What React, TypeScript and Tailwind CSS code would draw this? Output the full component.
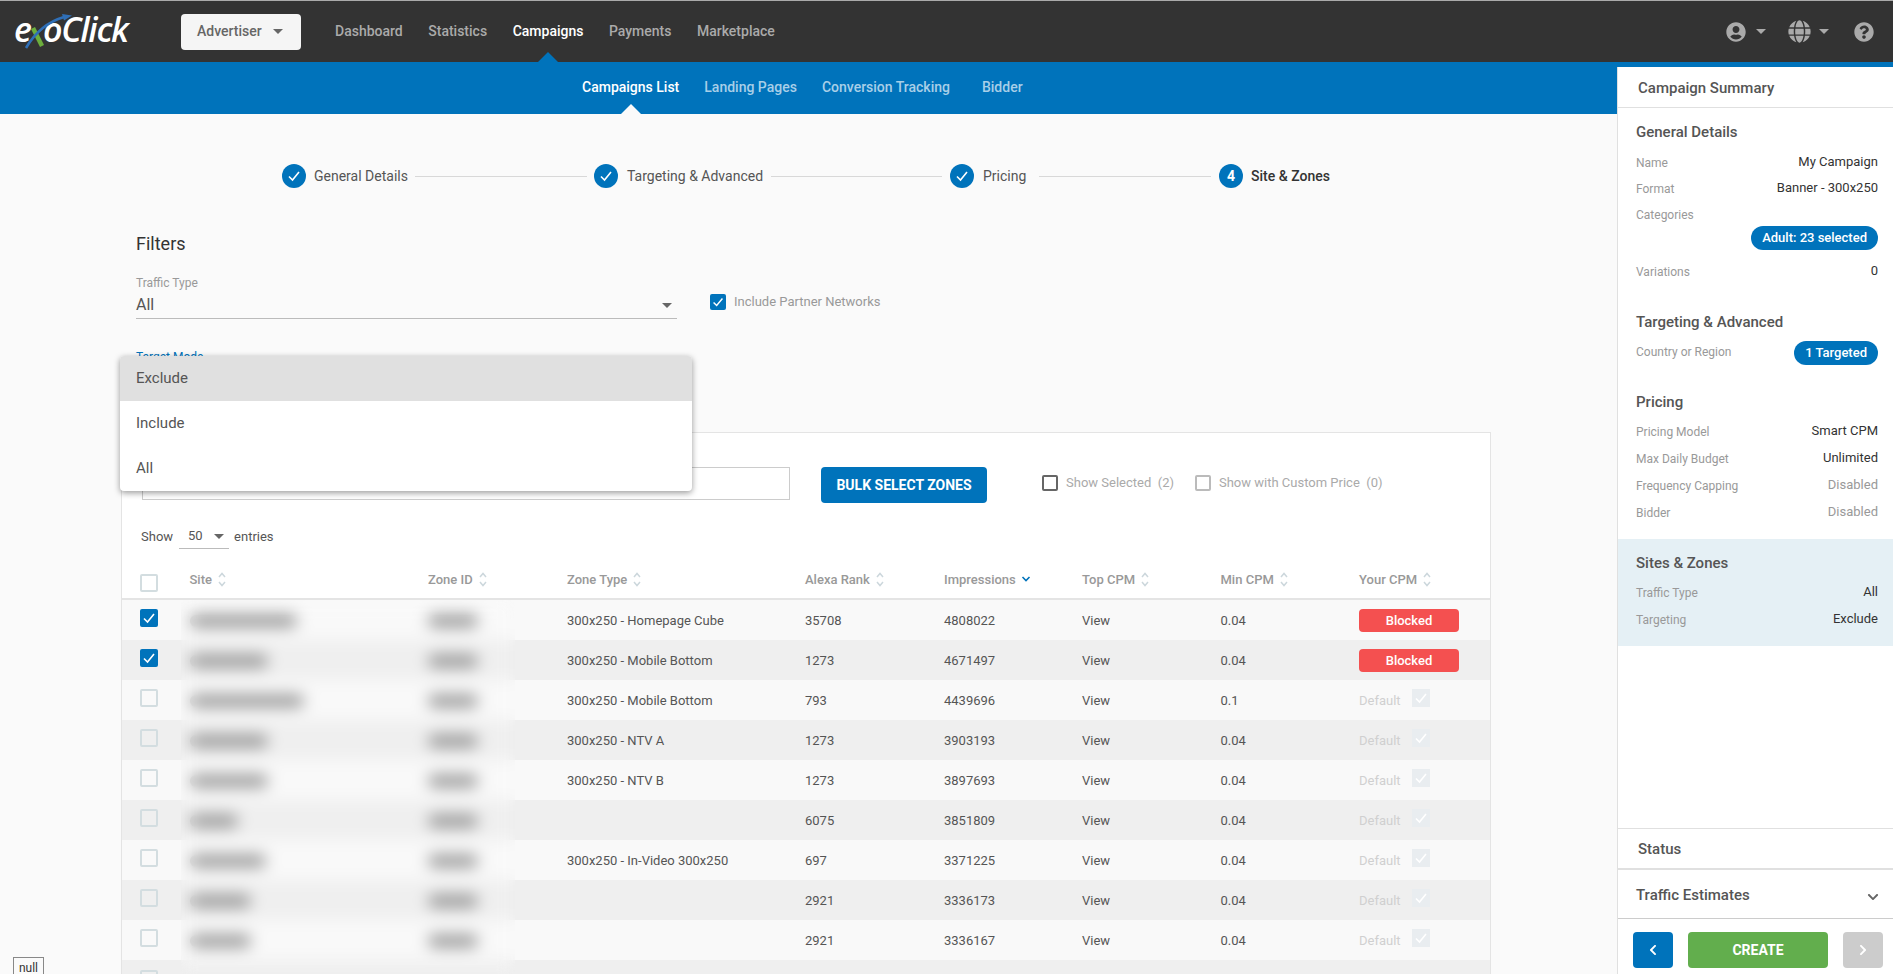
import { FaGlobe, FaQuestionCircle, FaUserCircle, FaChevronLeft, FaChevronRight, FaChevronDown } from "react-icons/fa";

const BLUE_CHECK = (
  <svg viewBox="0 0 18 18" className="h-full w-full">
    <path d="M4 9.5 7.5 13 14 5" fill="none" stroke="#fff" strokeWidth="1.6" />
  </svg>
);

function Caret({ className }: { className: string }) {
  return (
    <svg viewBox="0 0 10 5" className={className} fill="currentColor">
      <path d="M0 0h10L5 5z" />
    </svg>
  );
}

function SortIcon({ active }: { active?: boolean }) {
  if (active) {
    return (
      <svg viewBox="0 0 10 8" className="ml-[5px] -mt-[3px] h-[8px] w-[10px]">
        <path d="M1.5 2 5 5.5 8.5 2" fill="none" stroke="#0073bb" strokeWidth="1.6" />
      </svg>
    );
  }
  return (
    <svg viewBox="0 0 10 17" className="ml-[5px] -mt-[2px] h-[17px] w-[10px]">
      <path d="M2 6 5 2.5 8 6M2 11l3 3.5L8 11" fill="none" stroke="#ccd7dc" strokeWidth="1.5" />
    </svg>
  );
}

function Logo() {
  return (
    <div className="relative ml-[14px] h-[40px] w-[117px]">
      <span className="absolute left-0 top-[-3px] text-[34px] leading-[40px] tracking-[-1px] text-white italic font-['Open_Sans',sans-serif] font-semibold">
        e
      </span>
      <span className="absolute left-[29px] top-[-3px] text-[34px] leading-[40px] tracking-[-1.3px] text-white italic font-['Open_Sans',sans-serif] font-semibold">
        oClick
      </span>
      <svg viewBox="0 0 117 40" className="absolute left-0 top-0 h-[40px] w-[117px]">
        <path d="M19 16l9 18" stroke="#6cae3d" strokeWidth="4.5" fill="none" />
        <path d="M12 36Q26 12 50 5" stroke="#2f6fb7" strokeWidth="2.6" fill="none" />
        <path d="M48 2l10 1.5-8 5z" fill="#2f6fb7" />
      </svg>
    </div>
  );
}

function Header() {
  const items = ["Dashboard", "Statistics", "Campaigns", "Payments", "Marketplace"];
  return (
    <header className="flex h-[62px] shrink-0 items-center border-t border-[#aaaaaa] bg-[#333333]">
      <Logo />
      <button className="ml-[50px] flex h-[36px] w-[120px] items-center rounded-[4px] bg-[#f5f5f5] pl-[16px] text-[14px] font-medium text-[#666666]">
        Advertiser
        <Caret className="ml-[11px] h-[5px] w-[10px] text-[#666666]" />
      </button>
      <nav className="ml-[34px] flex gap-[25.5px]">
        {items.map((item) => (
          <a
            key={item}
            className={`relative text-[14px] font-medium ${item === "Campaigns" ? "text-white" : "text-[#aaaaaa]"}`}
          >
            {item}
            {item === "Campaigns" && (
              <span className="absolute left-1/2 top-[31px] -ml-[10px] h-0 w-0 border-x-[10px] border-b-[10px] border-x-transparent border-b-[#0073bb]" />
            )}
          </a>
        ))}
      </nav>
      <div className="ml-auto flex items-center pr-[19px] text-[#aaaaaa]">
        <FaUserCircle className="h-[20px] w-[20px]" />
        <Caret className="ml-[10px] h-[5px] w-[10px]" />
        <FaGlobe className="ml-[22px] h-[23px] w-[23px]" />
        <Caret className="ml-[8px] h-[5px] w-[10px]" />
        <FaQuestionCircle className="ml-[25px] h-[20px] w-[20px]" />
      </div>
    </header>
  );
}

function SubNav() {
  return (
    <div className="flex h-[52px] shrink-0 items-center bg-[#0073bb] pb-[2px] pl-[582px] text-[14px] font-medium text-[#a8cfe8]">
      <a className="relative text-white">
        Campaigns List
        <span className="absolute left-1/2 top-[27px] -ml-[10px] h-0 w-0 border-x-[10px] border-b-[10px] border-x-transparent border-b-[#fafafa]" />
      </a>
      <a className="ml-[25px]">Landing Pages</a>
      <a className="ml-[25px]">Conversion Tracking</a>
      <a className="ml-[32px]">Bidder</a>
    </div>
  );
}

function StepDot({ num }: { num?: number }) {
  return (
    <span className="flex h-[24px] w-[24px] shrink-0 items-center justify-center rounded-full bg-[#0073bb] text-[14px] font-bold text-white">
      {num ?? <span className="h-[18px] w-[18px]">{BLUE_CHECK}</span>}
    </span>
  );
}

function Stepper() {
  return (
    <div className="ml-[282px] mt-[50px] flex h-[24px] items-center whitespace-nowrap text-[14px] text-[#555555]">
      <StepDot />
      <span className="ml-[8px] w-[102px]">General Details</span>
      <span className="ml-[-1px] mr-[7px] h-px w-[172px] bg-[#d8d8d8]" />
      <StepDot />
      <span className="ml-[9px] w-[136px]">Targeting &amp; Advanced</span>
      <span className="ml-[8px] mr-[8px] h-px w-[171px] bg-[#d8d8d8]" />
      <StepDot />
      <span className="ml-[9px] w-[44px]">Pricing</span>
      <span className="ml-[12px] mr-[8px] h-px w-[172px] bg-[#d8d8d8]" />
      <StepDot num={4} />
      <span className="ml-[8px] font-medium text-[#333333]">Site &amp; Zones</span>
    </div>
  );
}

function Filters() {
  return (
    <div className="ml-[136px]">
      <h2 className="mt-[44px] text-[18px] leading-[24px] text-[#333333]">Filters</h2>
      <div className="mt-[19px] flex">
        <div className="h-[44px] w-[541px] border-b border-[#bbbbbb]">
          <div className="text-[12px] leading-[16px] text-[#999999]">Traffic Type</div>
          <div className="mt-[4px] flex items-center justify-between pr-[5px] text-[16px] leading-[20px] text-[#555555]">
            All
            <Caret className="h-[5px] w-[10px] text-[#666666]" />
          </div>
        </div>
        <label className="ml-[33px] mt-[19px] flex h-[16px] items-center text-[13px] text-[#999999]">
          <span className="h-[16px] w-[16px] rounded-[2px] bg-[#0073bb]">{BLUE_CHECK}</span>
          <span className="ml-[8px]">Include Partner Networks</span>
        </label>
      </div>
      <div className="mt-[30px] h-[83px] text-[12px] leading-[16px] text-[#0073bb]">Target Mode</div>
    </div>
  );
}

function Dropdown() {
  return (
    <ul className="absolute left-[120px] top-[294px] z-10 w-[572px] overflow-hidden rounded-[4px] bg-white text-[15px] text-[#555555] shadow-[0_2px_6px_rgba(0,0,0,0.4)]">
      <li className="flex h-[45px] items-center bg-[#e0e0e0] pl-[16px]">Exclude</li>
      <li className="flex h-[45px] items-center pl-[16px]">Include</li>
      <li className="flex h-[45px] items-center pl-[16px]">All</li>
    </ul>
  );
}

const cols = "grid grid-cols-[67.5px_238.5px_139px_238px_139px_138px_138.5px_138.5px_1fr] items-center";

const headers = ["Site", "Zone ID", "Zone Type", "Alexa Rank", "Impressions", "Top CPM", "Min CPM", "Your CPM"];

type Row = { site: number; type: string; rank: string; imp: string; min: string; blocked?: boolean; checked?: boolean };

const rows: Row[] = [
  { site: 107, type: "300x250 - Homepage Cube", rank: "35708", imp: "4808022", min: "0.04", blocked: true, checked: true },
  { site: 78, type: "300x250 - Mobile Bottom", rank: "1273", imp: "4671497", min: "0.04", blocked: true, checked: true },
  { site: 114, type: "300x250 - Mobile Bottom", rank: "793", imp: "4439696", min: "0.1" },
  { site: 78, type: "300x250 - NTV A", rank: "1273", imp: "3903193", min: "0.04" },
  { site: 78, type: "300x250 - NTV B", rank: "1273", imp: "3897693", min: "0.04" },
  { site: 48, type: "", rank: "6075", imp: "3851809", min: "0.04" },
  { site: 76, type: "300x250 - In-Video 300x250", rank: "697", imp: "3371225", min: "0.04" },
  { site: 61, type: "", rank: "2921", imp: "3336173", min: "0.04" },
  { site: 61, type: "", rank: "2921", imp: "3336167", min: "0.04" },
];

function TableRow({ row, index }: { row: Row; index: number }) {
  return (
    <div className={`${cols} h-[40px] pt-[1px] text-[13px] text-[#555555] ${index % 2 ? "bg-[#efefef]" : "bg-[#f9f9f9]"}`}>
      <div className="-mt-[5px] pl-[18px]">
        {row.checked ? (
          <span className="block h-[18px] w-[18px] rounded-[2px] bg-[#0073bb]">{BLUE_CHECK}</span>
        ) : (
          <span className="block h-[18px] w-[18px] rounded-[2px] border-2 border-[#d3dde0]" />
        )}
      </div>
      <div className="h-[12px] rounded-full bg-[#909090]" style={{ width: row.site }} />
      <div className="h-[12px] w-[50px] rounded-full bg-[#909090]" />
      <div>{row.type}</div>
      <div>{row.rank}</div>
      <div>{row.imp}</div>
      <div>View</div>
      <div>{row.min}</div>
      <div>
        {row.blocked ? (
          <span className="flex h-[23px] w-[100px] items-center justify-center rounded-[4px] bg-[#f45050] font-medium text-white">
            Blocked
          </span>
        ) : (
          <span className="flex items-center text-[#d0d0d0]">
            Default
            <span className="-mt-[5px] ml-[11px] h-[18px] w-[18px] bg-[#e9edf0]">{BLUE_CHECK}</span>
          </span>
        )}
      </div>
    </div>
  );
}

function ZonesTable() {
  return (
    <div className="ml-[121px] w-[1370px] border-x border-t border-[#e4e4e4] bg-white">
      <div className="flex items-start pt-[34px]">
        <input className="ml-[20px] h-[33px] w-[648px] border border-[#cccccc] bg-white" />
        <button className="ml-[31px] h-[36px] w-[166px] rounded-[4px] bg-[#0073bb] text-[14px] font-bold text-white">
          BULK SELECT ZONES
        </button>
        <label className="ml-[55px] mt-[8px] flex h-[16px] items-center text-[13px] text-[#aaaaaa]">
          <span className="h-[16px] w-[16px] rounded-[2px] border-2 border-[#666666]" />
          <span className="ml-[8px] whitespace-pre">Show Selected  (2)</span>
        </label>
        <label className="ml-[21px] mt-[8px] flex h-[16px] items-center text-[13px] text-[#aaaaaa]">
          <span className="h-[16px] w-[16px] rounded-[2px] border-2 border-[#bbbbbb]" />
          <span className="ml-[8px] whitespace-pre">Show with Custom Price  (0)</span>
        </label>
      </div>
      <div className="mt-[21px] flex h-[25px] items-center pl-[19px] text-[13px] text-[#555555]">
        Show
        <span className="ml-[6px] flex h-[25px] w-[50px] items-center justify-between border-b border-[#bbbbbb] pl-[9px] pr-[5px]">
          50
          <Caret className="h-[5px] w-[10px] text-[#666666]" />
        </span>
        <span className="ml-[5px]">entries</span>
      </div>
      <div className={`${cols} mt-[11px] h-[40px] border-b-2 border-[#e4e4e4] pt-[2px] text-[13px] font-medium text-[#999999]`}>
        <div className="mt-[5px] pl-[18px]">
          <span className="block h-[18px] w-[18px] rounded-[2px] border-2 border-[#d3dde0]" />
        </div>
        {headers.map((h) => (
          <div key={h} className="flex items-center">
            {h}
            <SortIcon active={h === "Impressions"} />
          </div>
        ))}
      </div>
      <div className="relative">
        {rows.map((row, i) => (
          <TableRow key={i} row={row} index={i} />
        ))}
        <div className="h-[40px] bg-[#efefef] pl-[18px] pt-[10px]">
          <span className="block h-[18px] w-[18px] rounded-[2px] border-2 border-[#d3dde0]" />
        </div>
        {/* Site and zone names are blurred out in the reference */}
        <div className="absolute bottom-0 left-[59px] top-0 w-[334px] backdrop-blur-[8px]" />
      </div>
    </div>
  );
}

function SummaryRow({ label, value, muted }: { label: string; value: string; muted?: boolean }) {
  return (
    <div className="flex h-[27px] items-center justify-between text-[12px]">
      <span className="text-[#999999]">{label}</span>
      <span className={`-mt-[2px] text-[13px] ${muted ? "text-[#999999]" : "text-[#333333]"}`}>{value}</span>
    </div>
  );
}

function Pill({ children }: { children: string }) {
  return (
    <span className="flex h-[24px] items-center rounded-full bg-[#0073bb] px-[11px] text-[13px] font-medium text-white">
      {children}
    </span>
  );
}

function SectionTitle({ children }: { children: string }) {
  return <h3 className="mb-[4px] text-[15px] font-medium leading-[24px] text-[#555555]">{children}</h3>;
}

function Sidebar() {
  return (
    <aside className="flex w-[276px] shrink-0 flex-col border-t-[5px] border-[#0073bb]">
      <div className="flex min-h-0 flex-1 flex-col border-l border-[#e0e0e0] bg-white">
        <div className="flex h-[41px] shrink-0 items-center border-b border-[#e0e0e0] pl-[20px] pt-[3px] text-[15px] font-medium text-[#555555]">
          Campaign Summary
        </div>
        <section className="pl-[18px] pr-[15px] pt-[12px]">
          <SectionTitle>General Details</SectionTitle>
          <div className="pt-[1px]">
            <SummaryRow label="Name" value="My Campaign" />
          </div>
          <div className="-mt-[1px]">
            <SummaryRow label="Format" value="Banner - 300x250" />
          </div>
          <div className="flex h-[24px] items-center pt-[2px] text-[12px] text-[#999999]">Categories</div>
          <div className="flex justify-end">
            <Pill>Adult: 23 selected</Pill>
          </div>
          <div className="mt-[8px]">
            <SummaryRow label="Variations" value="0" />
          </div>
        </section>
        <section className="pl-[18px] pr-[15px] pt-[25px]">
          <h3 className="text-[15px] font-medium leading-[24px] text-[#555555]">Targeting &amp; Advanced</h3>
          <div className="mt-[7px] flex h-[24px] items-center justify-between text-[12px] text-[#999999]">
            <span className="-mt-[2px]">Country or Region</span>
            <Pill>1 Targeted</Pill>
          </div>
        </section>
        <section className="pl-[18px] pr-[15px] pt-[25px]">
          <SectionTitle>Pricing</SectionTitle>
          <SummaryRow label="Pricing Model" value="Smart CPM" />
          <SummaryRow label="Max Daily Budget" value="Unlimited" />
          <SummaryRow label="Frequency Capping" value="Disabled" muted />
          <SummaryRow label="Bidder" value="Disabled" muted />
        </section>
        <section className="mt-[13px] bg-[#e5f0f5] pb-[13px] pl-[18px] pr-[15px] pt-[12px]">
          <SectionTitle>Sites &amp; Zones</SectionTitle>
          <SummaryRow label="Traffic Type" value="All" />
          <SummaryRow label="Targeting" value="Exclude" />
        </section>
        <div className="mt-auto">
          <div className="flex h-[42px] items-center border-y border-b-2 border-[#e0e0e0] pl-[20px] pt-[1px] text-[15px] font-medium text-[#555555]">
            Status
          </div>
          <div className="flex h-[49px] items-center justify-between border-b border-[#cccccc] pl-[18px] pr-[14px] pt-[2px] text-[15px] font-medium text-[#555555]">
            Traffic Estimates
            <FaChevronDown className="mt-[3px] h-[12px] w-[12px] text-[#666666]" />
          </div>
          <div className="flex h-[55px] items-start gap-[15px] pl-[15px] pt-[13px]">
            <button className="flex h-[36px] w-[40px] items-center justify-center rounded-[4px] bg-[#0073bb] text-white">
              <FaChevronLeft className="h-[12px] w-[12px]" />
            </button>
            <button className="h-[36px] w-[140px] rounded-[4px] bg-[#62ae4d] text-[14px] font-bold text-white">
              CREATE
            </button>
            <button className="flex h-[36px] w-[40px] items-center justify-center rounded-[4px] bg-[#cccccc] text-white">
              <FaChevronRight className="h-[12px] w-[12px]" />
            </button>
          </div>
        </div>
      </div>
    </aside>
  );
}

export default function App() {
  return (
    <div className="relative flex h-screen flex-col overflow-hidden bg-[#fafafa] font-['Roboto',sans-serif]">
      <Header />
      <div className="flex min-h-0 flex-1">
        <div className="relative min-w-0 flex-1 overflow-hidden">
          <SubNav />
          <Stepper />
          <Filters />
          <Dropdown />
          <ZonesTable />
        </div>
        <Sidebar />
      </div>
      <span className="absolute left-[13px] top-[957px] flex h-[24px] w-[31px] justify-center border border-[#888888] bg-[#fafafa] text-[12px] leading-[20px] text-[#333333]">
        null
      </span>
    </div>
  );
}
